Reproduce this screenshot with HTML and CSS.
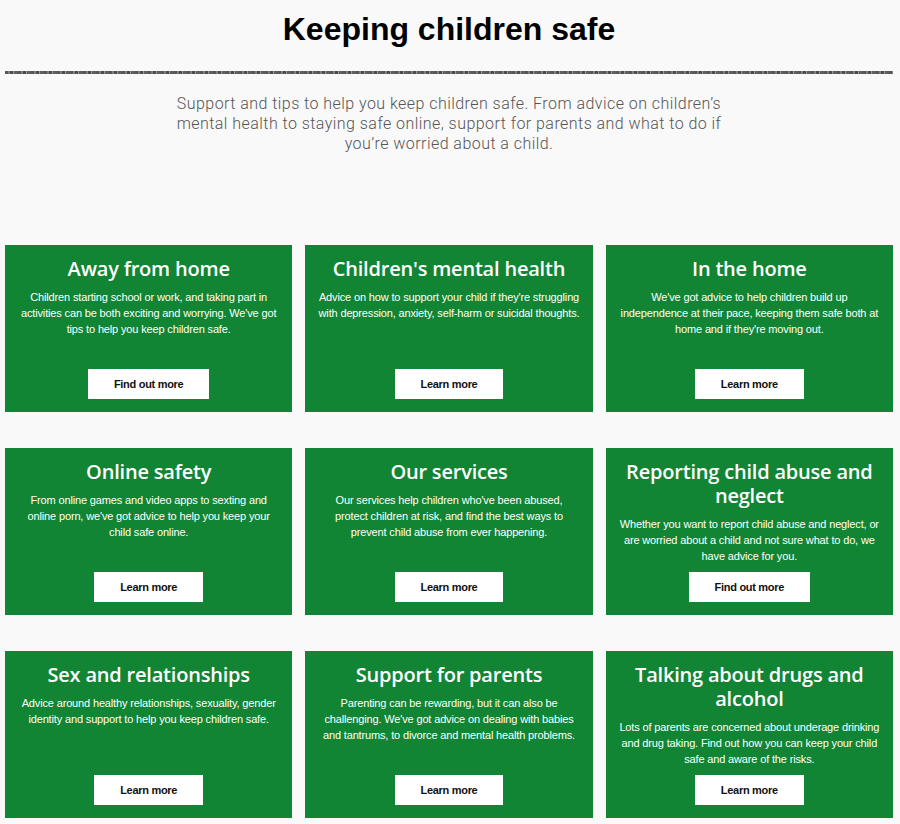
FILE: index.html
```html
<!DOCTYPE html>
<html lang="en">
<head>
<meta charset="utf-8">
<title>Keeping children safe</title>
<link rel="stylesheet" href="styles.css">
</head>
<body>
<div class="page">
  <header class="intro">
    <h1 class="intro-title">Keeping children safe</h1>
    <div class="rule"></div>
    <p class="intro-text">Support and tips to help you keep children safe. From advice on children’s mental health to staying safe online, support for parents and what to do if you’re worried about a child.</p>
  </header>

  <section class="cards">
    <article class="card">
      <h2 class="card-title">Away from home</h2>
      <p class="card-text">Children starting school or work, and taking part in activities can be both exciting and worrying. We've got tips to help you keep children safe.</p>
      <a class="card-btn" href="#">Find out more</a>
    </article>
    <article class="card">
      <h2 class="card-title">Children's mental health</h2>
      <p class="card-text">Advice on how to support your child if they're struggling with depression, anxiety, self-harm or suicidal thoughts.</p>
      <a class="card-btn" href="#">Learn more</a>
    </article>
    <article class="card">
      <h2 class="card-title">In the home</h2>
      <p class="card-text">We've got advice to help children build up independence at their pace, keeping them safe both at home and if they're moving out.</p>
      <a class="card-btn" href="#">Learn more</a>
    </article>
    <article class="card">
      <h2 class="card-title">Online safety</h2>
      <p class="card-text">From online games and video apps to sexting and online porn, we've got advice to help you keep your child safe online.</p>
      <a class="card-btn" href="#">Learn more</a>
    </article>
    <article class="card">
      <h2 class="card-title">Our services</h2>
      <p class="card-text">Our services help children who've been abused, protect children at risk, and find the best ways to prevent child abuse from ever happening.</p>
      <a class="card-btn" href="#">Learn more</a>
    </article>
    <article class="card">
      <h2 class="card-title">Reporting child abuse and neglect</h2>
      <p class="card-text">Whether you want to report child abuse and neglect, or are worried about a child and not sure what to do, we have advice for you.</p>
      <a class="card-btn" href="#">Find out more</a>
    </article>
    <article class="card">
      <h2 class="card-title">Sex and relationships</h2>
      <p class="card-text">Advice around healthy relationships, sexuality, gender identity and support to help you keep children safe.</p>
      <a class="card-btn" href="#">Learn more</a>
    </article>
    <article class="card">
      <h2 class="card-title">Support for parents</h2>
      <p class="card-text">Parenting can be rewarding, but it can also be challenging. We've got advice on dealing with babies and tantrums, to divorce and mental health problems.</p>
      <a class="card-btn" href="#">Learn more</a>
    </article>
    <article class="card">
      <h2 class="card-title">Talking about drugs and alcohol</h2>
      <p class="card-text">Lots of parents are concerned about underage drinking and drug taking. Find out how you can keep your child safe and aware of the risks.</p>
      <a class="card-btn" href="#">Learn more</a>
    </article>
  </section>
</div>
</body>
</html>
```

FILE: styles.css
```css
html, body {
  margin: 0;
  padding: 0;
  background: #f9f9f9;
}

.page {
  padding: 0 7px 0 5px;
  font-family: "Liberation Sans", Arial, sans-serif;
}

.intro {
  display: flex;
  flex-direction: column;
  align-items: center;
}

.intro-title {
  margin: 0;
  padding-top: 9px;
  font-family: "Liberation Sans", Arial, sans-serif;
  font-size: 32px;
  line-height: 40px;
  font-weight: 700;
  color: #000;
}

.rule {
  align-self: stretch;
  margin-top: 22px;
  height: 3px;
  background:
    repeating-linear-gradient(90deg, #3a3a3a 0 3px, #6a6a6a 3px 5px, #2e2e2e 5px 8px, #8a8a8a 8px 9px, #444 9px 13px);
  opacity: 0.85;
}

.intro-text {
  margin: 20px 0 0;
  max-width: 560px;
  text-align: center;
  font-family: Roboto, "Liberation Sans", sans-serif;
  font-weight: 300;
  font-size: 16px;
  line-height: 20px;
  letter-spacing: 0.45px;
  color: #555;
}

.cards {
  margin-top: 91px;
  display: grid;
  grid-template-columns: repeat(3, 1fr);
  column-gap: 13px;
  row-gap: 36px;
}

.card {
  min-height: 167px;
  box-sizing: border-box;
  padding: 12px 12.5px 13px;
  background: #118533;
  color: #fff;
  display: flex;
  flex-direction: column;
  align-items: center;
  text-align: center;
}

.card-title {
  margin: 0;
  font-family: "Open Sans", sans-serif;
  font-weight: 600;
  font-size: 20px;
  line-height: 24px;
  letter-spacing: -0.2px;
}

.card-text {
  margin: 8px 0 7px;
  font-family: "Liberation Sans", Arial, sans-serif;
  font-size: 11px;
  line-height: 16px;
  letter-spacing: -0.15px;
}

.card-btn {
  margin-top: auto;
  display: inline-flex;
  align-items: center;
  justify-content: center;
  height: 30px;
  padding: 0 26px;
  background: #fff;
  color: #111;
  text-decoration: none;
  font-family: "Liberation Sans", Arial, sans-serif;
  font-weight: 700;
  font-size: 11px;
  letter-spacing: -0.3px;
}
```
